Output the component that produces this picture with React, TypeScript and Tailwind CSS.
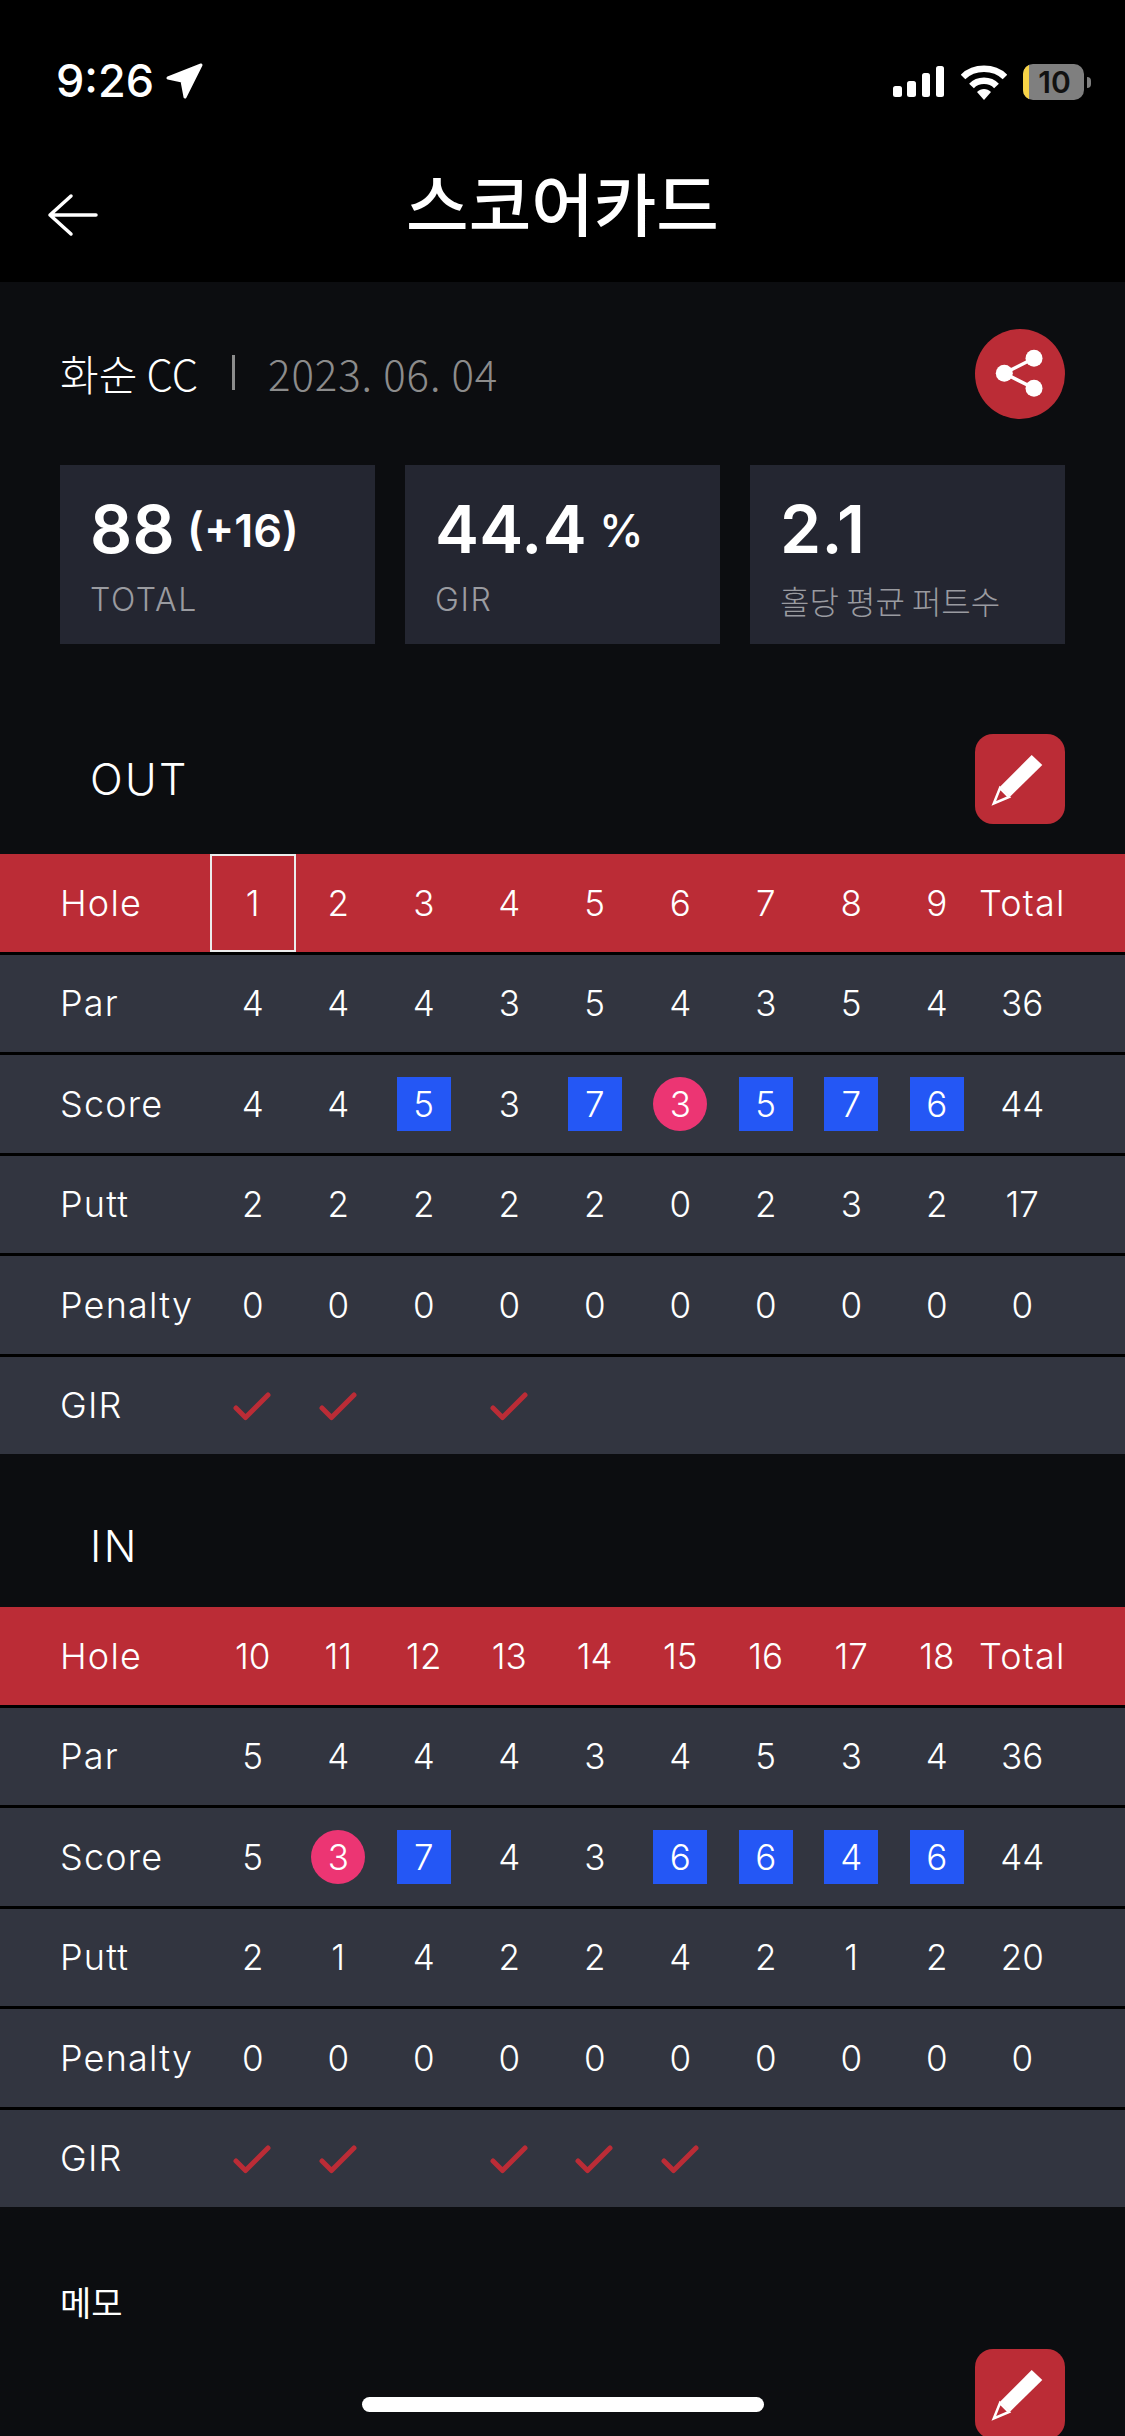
import React from "react";
import clsx from "clsx";

const latin = "font-['Inter','Noto_Sans_CJK_KR',sans-serif]";
const korean = "font-['Noto_Sans_CJK_KR','Noto_Sans',sans-serif]";

type Mark = "bogey" | "birdie" | undefined;

type Section = {
  title: string;
  holes: string[];
  par: string[];
  score: string[];
  marks: Record<number, Mark>;
  putt: string[];
  penalty: string[];
  gir: number[];
};

const sections: Section[] = [
  {
    title: "OUT",
    holes: ["1", "2", "3", "4", "5", "6", "7", "8", "9"],
    par: ["4", "4", "4", "3", "5", "4", "3", "5", "4", "36"],
    score: ["4", "4", "5", "3", "7", "3", "5", "7", "6", "44"],
    marks: { 2: "bogey", 4: "bogey", 5: "birdie", 6: "bogey", 7: "bogey", 8: "bogey" },
    putt: ["2", "2", "2", "2", "2", "0", "2", "3", "2", "17"],
    penalty: ["0", "0", "0", "0", "0", "0", "0", "0", "0", "0"],
    gir: [0, 1, 3]
  },
  {
    title: "IN",
    holes: ["10", "11", "12", "13", "14", "15", "16", "17", "18"],
    par: ["5", "4", "4", "4", "3", "4", "5", "3", "4", "36"],
    score: ["5", "3", "7", "4", "3", "6", "6", "4", "6", "44"],
    marks: { 1: "birdie", 2: "bogey", 5: "bogey", 6: "bogey", 7: "bogey", 8: "bogey" },
    putt: ["2", "1", "4", "2", "2", "4", "2", "1", "2", "20"],
    penalty: ["0", "0", "0", "0", "0", "0", "0", "0", "0", "0"],
    gir: [0, 1, 3, 4, 5]
  }
];

function EditButton() {
  return (
    <div className="h-[90px] w-[90px] rounded-[18px] bg-[#bb2c36]">
      <svg viewBox="0 0 90 90" className="h-full w-full">
        <polygon points="56.7,21 67.3,31 35,62.7 25,52.7" fill="#fff" />
        <polygon points="25,54 18.8,69.5 34,63" fill="none" stroke="#fff" strokeWidth="2.5" />
      </svg>
    </div>
  );
}

function CheckMark() {
  return (
    <svg viewBox="0 0 38 30" className="mr-[1px] mt-[3px] h-[30px] w-[38px]">
      <path d="M3 16 L12.5 25.5 L35 3" fill="none" stroke="#bb2c36" strokeWidth="5" strokeLinecap="round" strokeLinejoin="round" />
    </svg>
  );
}

function Row({ label, children, className }: { label: string; children: React.ReactNode; className?: string }) {
  return (
    <div className={clsx("grid h-[97.5px] grid-cols-[210px_repeat(10,85.5px)] items-center text-[35px] font-light text-white", latin, className)}>
      <span className="pl-[60px] text-[36px] tracking-[1.2px]">{label}</span>
      {children}
    </div>
  );
}

function Cell({ value, mark }: { value: string; mark?: Mark }) {
  return (
    <div className="flex items-center justify-center">
      <span
        className={clsx(
          "flex h-[54px] w-[54px] items-center justify-center",
          mark === "bogey" && "bg-[#2457f5]",
          mark === "birdie" && "rounded-full bg-[#ec3573]"
        )}
      >
        {value}
      </span>
    </div>
  );
}

function ScoreTable({ section, selected }: { section: Section; selected?: number }) {
  return (
    <div className="flex flex-col gap-[3px] bg-black">
      <Row label="Hole" className="bg-[#bb2c36]">
        {section.holes.map((hole, i) => (
          <div
            key={hole}
            className={clsx("flex h-full items-center justify-center", i === selected && "border-2 border-[#ececec]")}
          >
            {hole}
          </div>
        ))}
        <div className="flex items-center justify-center text-[36px] tracking-[1.2px]">Total</div>
      </Row>
      <Row label="Par" className="bg-[#323540]">
        {section.par.map((v, i) => (
          <Cell key={i} value={v} />
        ))}
      </Row>
      <Row label="Score" className="bg-[#323540]">
        {section.score.map((v, i) => (
          <Cell key={i} value={v} mark={section.marks[i]} />
        ))}
      </Row>
      <Row label="Putt" className="bg-[#323540]">
        {section.putt.map((v, i) => (
          <Cell key={i} value={v} />
        ))}
      </Row>
      <Row label="Penalty" className="bg-[#323540]">
        {section.penalty.map((v, i) => (
          <Cell key={i} value={v} />
        ))}
      </Row>
      <Row label="GIR" className="bg-[#323540]">
        {section.holes.map((hole, i) => (
          <div key={hole} className="flex items-center justify-center">
            {section.gir.includes(i) ? <CheckMark /> : null}
          </div>
        ))}
      </Row>
    </div>
  );
}

function StatCard({
  value,
  unit,
  label,
  labelClass,
  unitClass
}: {
  value: string;
  unit?: string;
  label: string;
  labelClass: string;
  unitClass?: string;
}) {
  return (
    <div className="h-[179px] w-[315px] bg-[#242631] pl-[30px] pt-[29px] text-white">
      <div className={clsx("flex h-[70px] items-center", latin)}>
        <span className="text-[66px] font-semibold tracking-[0.3px]">{value}</span>
        {unit ? <span className={clsx("ml-[12px] mt-[4px]", unitClass)}>{unit}</span> : null}
      </div>
      <div className={clsx("mt-[14px] font-light leading-[44px] text-[#9a9ba0]", labelClass)}>{label}</div>
    </div>
  );
}

function StatusBar() {
  return (
    <div className="flex h-[112px] items-start justify-between pl-[56px] pr-[34px] pt-[57px] text-white">
      <div className="flex items-center">
        <span className={clsx("text-[45px] font-medium leading-[48px]", latin)}>9:26</span>
        <svg viewBox="0 0 40 40" className="ml-[11px] h-[40px] w-[40px]">
          <path d="M3 17 L36 4 L20 36 L17 20 Z" fill="#fff" stroke="#fff" strokeWidth="3" strokeLinejoin="round" />
        </svg>
      </div>
      <div className="flex items-center gap-[16px] pt-[7px]">
        <svg viewBox="0 0 52 32" className="h-[32px] w-[52px]">
          <rect x="0" y="20" width="9" height="11" rx="2.5" fill="#fff" />
          <rect x="14" y="15" width="9" height="16" rx="2.5" fill="#fff" />
          <rect x="29" y="7" width="8" height="24" rx="2.5" fill="#fff" />
          <rect x="43" y="0" width="8" height="31" rx="2.5" fill="#fff" />
        </svg>
        <svg viewBox="0 0 46 35" className="h-[35px] w-[46px]">
          <path d="M2 12 C13 1 33 1 44 12" fill="none" stroke="#fff" strokeWidth="6.5" />
          <path d="M10.5 21 C17 14 29 14 35.5 21" fill="none" stroke="#fff" strokeWidth="6.5" />
          <path d="M16 27 C20 23 26 23 30 27 L23 35 Z" fill="#fff" />
        </svg>
        <div className="relative flex items-center">
          <div className="relative flex h-[36px] w-[61px] items-center justify-center overflow-hidden rounded-[10px] bg-[#7f7f7f]">
            <div className="absolute inset-y-0 left-0 w-[6px] bg-[#f7d347]" />
            <span className={clsx("relative pl-[2px] text-[30px] font-semibold leading-none text-[#111]", latin)}>10</span>
          </div>
          <div className="ml-[3px] h-[11px] w-[4px] rounded-r-full bg-[#7f7f7f]" />
        </div>
      </div>
    </div>
  );
}

export default function App() {
  return (
    <div className="relative h-[2436px] w-[1125px] overflow-hidden bg-[#0c0d10]">
      <header className="h-[282px] bg-black">
        <StatusBar />
        <div className="grid h-[170px] grid-cols-[1fr_auto_1fr] items-center">
          <svg viewBox="0 0 52 44" className="ml-[47px] mt-[36px] h-[44px] w-[52px]">
            <path d="M24 3 L3 22 L24 41 M3 22 H49" fill="none" stroke="#fff" strokeWidth="3.5" strokeLinecap="round" strokeLinejoin="round" />
          </svg>
          <h1 className={clsx("mt-[10px] text-[68px] font-medium leading-none text-white", korean)}>스코어카드</h1>
        </div>
      </header>

      <div className="flex items-center justify-between pl-[60px] pr-[60px] pt-[47px]">
        <div className={clsx("mt-[-3px] flex items-center text-[42px] font-light", korean)}>
          <span className="text-white">화순 CC</span>
          <span className="ml-[34px] h-[35px] w-[3px] bg-[#8c8c8c]" />
          <span className="ml-[33px] tracking-[0.9px] text-[#8c8c8c]">2023. 06. 04</span>
        </div>
        <div className="h-[90px] w-[90px] rounded-full bg-[#bb2c36]">
          <svg viewBox="0 0 90 90" className="h-full w-full">
            <path d="M59 29.3 L29.3 44.3 L59 59.3" fill="none" stroke="#fff" strokeWidth="3.5" />
            <circle cx="59" cy="29.3" r="8.5" fill="#fff" />
            <circle cx="29.3" cy="44.3" r="8.5" fill="#fff" />
            <circle cx="59" cy="59.3" r="8.5" fill="#fff" />
          </svg>
        </div>
      </div>

      <div className="flex justify-between px-[60px] pt-[46px]">
        <StatCard value="88" unit="(+16)" unitClass="text-[45px] font-semibold" label="TOTAL" labelClass={clsx(latin, "text-[32px] tracking-[1.6px]")} />
        <StatCard value="44.4" unit="%" unitClass="text-[45px] font-medium" label="GIR" labelClass={clsx(latin, "text-[32px] tracking-[1.6px]")} />
        <StatCard value="2.1" label="홀당 평균 퍼트수" labelClass={clsx(korean, "text-[32px]")} />
      </div>

      <div className="flex items-center justify-between pl-[90px] pr-[60px] pt-[90px]">
        <span className={clsx("text-[43px] font-light tracking-[2.4px] text-white", latin)}>OUT</span>
        <EditButton />
      </div>
      <div className="pt-[30px]">
        <ScoreTable section={sections[0]} selected={0} />
      </div>

      <div className={clsx("flex h-[153px] items-center pl-[90px] pt-[31px] text-[43px] font-light tracking-[2.4px] text-white", latin)}>IN</div>
      <ScoreTable section={sections[1]} />

      <div className={clsx("pl-[60px] pt-[71px] text-[34px] leading-[48px] text-white", korean)}>메모</div>
      <div className="flex justify-end pr-[60px] pt-[23px]">
        <EditButton />
      </div>

      <div className="absolute left-[362px] top-[2397px] h-[15px] w-[402px] rounded-full bg-white" />
    </div>
  );
}
